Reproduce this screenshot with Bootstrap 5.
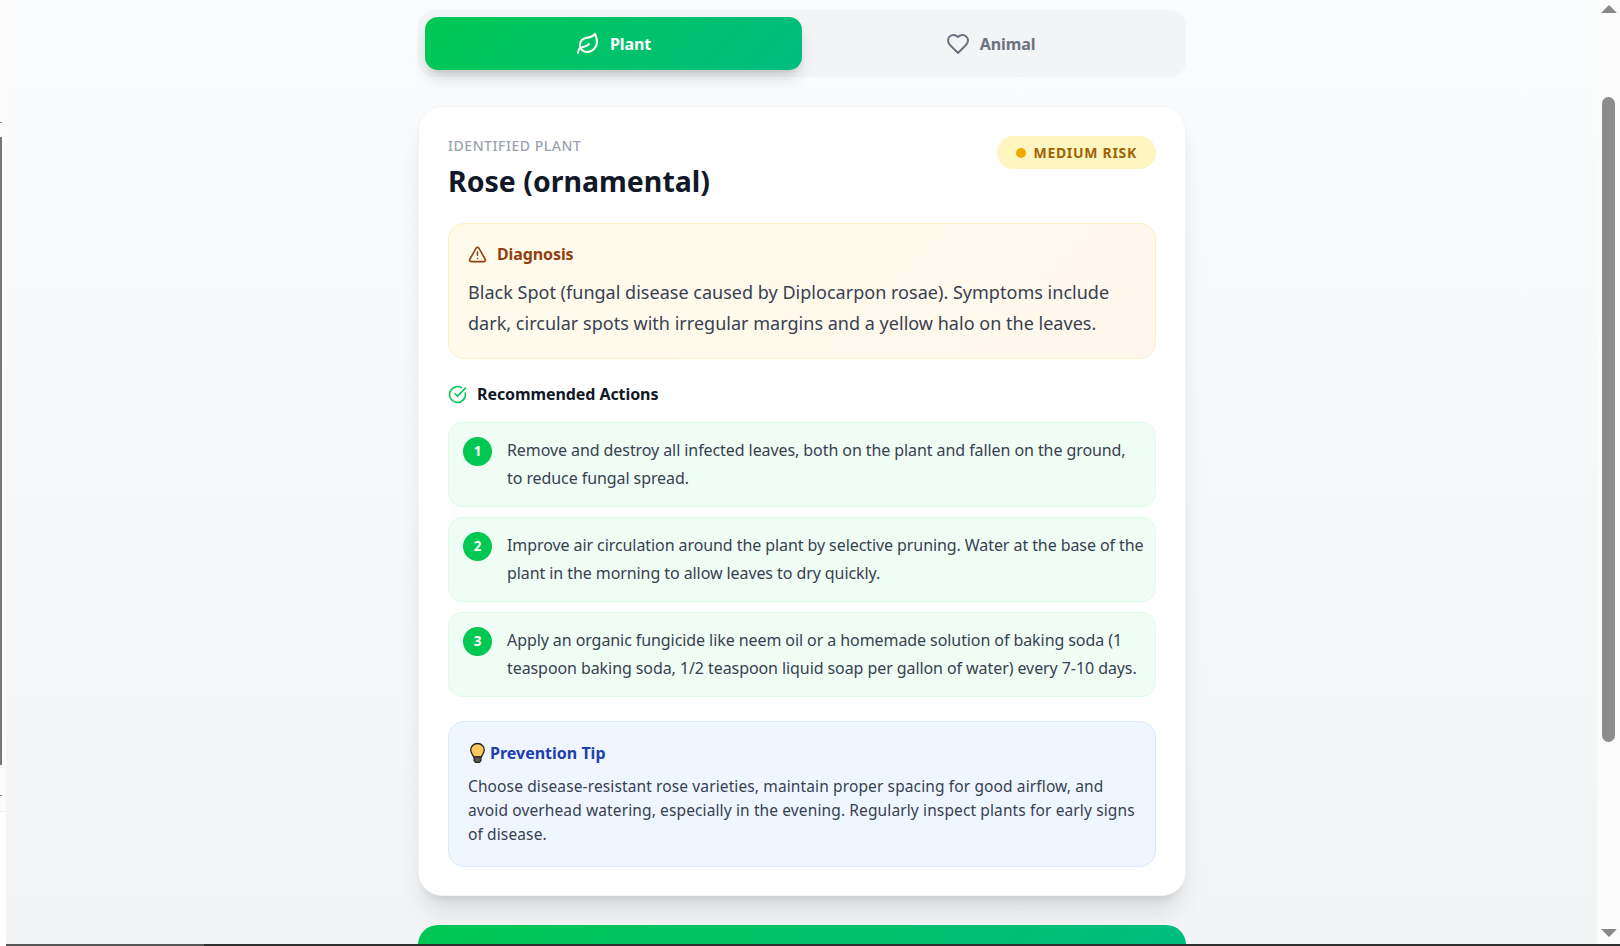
<!doctype html>
<html lang="en">
<head>
<meta charset="utf-8">
<title>Rose diagnosis</title>
<link href="https://cdn.jsdelivr.net/npm/bootstrap@5.3.0/dist/css/bootstrap.min.css" rel="stylesheet">
<style>
html,body{height:946px;overflow:hidden}
body{font-family:"Noto Sans","Open Sans",sans-serif;background:#fff;color:#374151}
.frame-row{height:944px}
.edge-strip{width:6px;background:#fbfbfb;position:relative}
.edge-rule{position:absolute;left:0;top:137px;width:2px;height:628px;background:#777}
.edge-mark{position:absolute;left:0;width:2px;height:1px;background:#888}
.mark-high{top:122px}
.mark-low{top:795px}
.edge-low{position:absolute;left:0;top:811px;width:6px;height:135px;background:#fff;border-top:1px solid #eee}
.page-area{flex:1;min-width:0;overflow:hidden;background:linear-gradient(180deg,#fafbfd,#f3f4f6);padding:10px 0 0 1px}
.page-col{width:768px;margin:0 auto}
.tab-track{background:#f3f4f6;border-radius:16px;padding:7px;height:67px}
.tab-item{flex:1;border-radius:13px;font-weight:700;font-size:16px;letter-spacing:-.1px;color:#6b7280;gap:10px}
.tab-on{background:linear-gradient(135deg,#00c853,#00bd80);color:#fff;box-shadow:0 10px 15px -3px rgba(0,0,0,.16),0 4px 6px -4px rgba(0,0,0,.12)}
.result-panel{margin-top:29px;background:#fff;border-radius:24px;padding:29px 29px 29px;height:790px;box-shadow:0 20px 25px -5px rgba(0,0,0,.1),0 8px 10px -6px rgba(0,0,0,.1);border:1px solid #f3f4f6}
.id-label{font-size:14px;font-weight:500;letter-spacing:.55px;color:#9ca3af;line-height:18px;margin-top:1px}
.plant-name{font-size:28.5px;font-weight:700;color:#111827;line-height:36px;margin:8px 0 0}
.risk-pill{background:#fef6c0;color:#a16207;border-radius:999px;height:33px;padding:0 19px;font-size:14px;font-weight:700;letter-spacing:.7px;gap:7px}
.risk-dot{width:10px;height:10px;border-radius:50%;background:#eeaa00}
.diag-box{margin-top:24px;height:136px;border-radius:16px;border:1px solid #fdf0c4;background:linear-gradient(135deg,#fffbeb,#fff7ed);padding:19px 19px}
.diag-title{font-size:16px;font-weight:700;color:#92400e;line-height:22px;letter-spacing:-.1px;gap:10px}
.diag-text{font-size:18px;line-height:31px;color:#374151;margin:12px 0 0;letter-spacing:.02px}
.act-head{margin-top:23px;font-size:16px;font-weight:700;color:#111827;line-height:22px;letter-spacing:-.08px;gap:10px;height:24px}
.step-list{margin-top:16px;gap:10px}
.step-row{height:85px;border-radius:14px;background:#f0fdf4;border:1px solid #dcfce7;padding:14px 8px 0 14px;gap:15px}
.step-num{width:29px;height:29px;border-radius:50%;background:#00c853;color:#fff;font-size:13.5px;font-weight:700;flex:none}
.step-text{font-size:16px;line-height:27.6px;margin:0;color:#374151;letter-spacing:-.08px}
.tip-box{margin-top:24px;height:146px;border-radius:16px;background:#eff6ff;border:1px solid #dbeafe;padding:20px 19px}
.tip-title{font-size:16px;font-weight:700;color:#1e40af;line-height:22px;gap:3px}
.tip-text{font-size:15.5px;line-height:24px;margin:10px 0 0;color:#374151;letter-spacing:.12px}
.cta-bar{margin-top:29px;height:40px;border-radius:20px 20px 0 0;background:linear-gradient(135deg,#00c853,#00bd80)}
.fake-scroll{width:23px;background:#fbfbfb;position:relative}
.scroll-up{position:absolute;left:4px;top:5px;width:0;height:0;border-left:8px solid transparent;border-right:8px solid transparent;border-bottom:8px solid #888}
.scroll-down{position:absolute;left:4px;bottom:7px;width:0;height:0;border-left:8px solid transparent;border-right:8px solid transparent;border-top:8px solid #888}
.scroll-thumb{position:absolute;left:5px;top:97px;width:13px;height:645px;border-radius:7px;background:#8c8c8c}
.bottom-line{height:2px;background:linear-gradient(90deg,#555 0 204px,#2f2f2f 204px)}
</style>
</head>
<body>
<div class="d-flex frame-row">
  <div class="edge-strip"><div class="edge-mark mark-high"></div><div class="edge-rule"></div><div class="edge-mark mark-low"></div><div class="edge-low"></div></div>
  <main class="page-area">
    <div class="page-col">
      <div class="tab-track d-flex">
        <div class="tab-item tab-on d-flex align-items-center justify-content-center">
          <svg width="24" height="24" viewBox="0 0 24 24" fill="none" stroke="currentColor" stroke-width="2" stroke-linecap="round" stroke-linejoin="round"><path d="M11 20A7 7 0 0 1 9.8 6.1C15.5 5 17 4.48 19 2c1 2 2 4.18 2 8 0 5.5-4.78 10-10 10Z"/><path d="M2 21c0-3 1.85-5.36 5.08-6C9.5 14.52 12 13 13 12"/></svg>
          <span>Plant</span>
        </div>
        <div class="tab-item d-flex align-items-center justify-content-center">
          <svg width="24" height="24" viewBox="0 0 24 24" fill="none" stroke="currentColor" stroke-width="2" stroke-linecap="round" stroke-linejoin="round"><path d="M19 14c1.49-1.46 3-3.21 3-5.5A5.5 5.5 0 0 0 16.5 3c-1.76 0-3 .5-4.5 2-1.500-1.500-2.740-2-4.500-2A5.500 5.500 0 0 0 2 8.500c0 2.300 1.500 4.050 3 5.500l7 7Z"/></svg>
          <span>Animal</span>
        </div>
      </div>

      <section class="result-panel">
        <div class="d-flex justify-content-between align-items-start">
          <div>
            <div class="id-label">IDENTIFIED PLANT</div>
            <h1 class="plant-name">Rose (ornamental)</h1>
          </div>
          <div class="risk-pill d-flex align-items-center"><span class="risk-dot"></span><span>MEDIUM RISK</span></div>
        </div>

        <div class="diag-box">
          <div class="diag-title d-flex align-items-center">
            <svg width="19" height="19" viewBox="0 0 24 24" fill="none" stroke="currentColor" stroke-width="2" stroke-linecap="round" stroke-linejoin="round"><path d="m21.730 18-8-14a2 2 0 0 0-3.480 0l-8 14A2 2 0 0 0 4 21h16a2 2 0 0 0 1.730-3Z"/><path d="M12 9v4"/><path d="M12 17h.010"/></svg>
            <span>Diagnosis</span>
          </div>
          <p class="diag-text">Black Spot (fungal disease caused by Diplocarpon rosae). Symptoms include dark, circular spots with irregular margins and a yellow halo on the leaves.</p>
        </div>

        <div class="act-head d-flex align-items-center">
          <svg width="19" height="19" viewBox="0 0 24 24" fill="none" stroke="#00c853" stroke-width="2" stroke-linecap="round" stroke-linejoin="round"><path d="M21.800 10A10 10 0 1 1 17 3.340"/><path d="m9 11 3 3L22 4"/></svg>
          <span>Recommended Actions</span>
        </div>

        <div class="step-list d-flex flex-column">
          <div class="step-row d-flex">
            <span class="step-num d-flex align-items-center justify-content-center">1</span>
            <p class="step-text">Remove and destroy all infected leaves, both on the plant and fallen on the ground, to&nbsp;reduce fungal spread.</p>
          </div>
          <div class="step-row d-flex">
            <span class="step-num d-flex align-items-center justify-content-center">2</span>
            <p class="step-text">Improve air circulation around the plant by selective pruning. Water at the base of the plant in the morning to allow leaves to dry quickly.</p>
          </div>
          <div class="step-row d-flex">
            <span class="step-num d-flex align-items-center justify-content-center">3</span>
            <p class="step-text">Apply an organic fungicide like neem oil or a homemade solution of baking soda (1 teaspoon baking soda, 1/2 teaspoon liquid soap per gallon of water) every 7-10 days.</p>
          </div>
        </div>

        <div class="tip-box">
          <div class="tip-title d-flex align-items-center">
            <svg width="19" height="22" viewBox="0 0 19 22"><path d="M9.500 1.500C5.400 1.500 2.700 4.500 2.700 8c0 3 2 4.300 3 7h7.600c1-2.700 3-4 3-7 0-3.500-2.700-6.500-6.800-6.500Z" fill="#fcc85c" stroke="#222" stroke-width="1.300"/><path d="M6 15h7v3.500l-1.500 2h-4L6 18.500Z" fill="#555" stroke="#222" stroke-width="1.100"/></svg>
            <span>Prevention Tip</span>
          </div>
          <p class="tip-text">Choose disease-resistant rose varieties, maintain proper spacing for good airflow, and avoid overhead watering, especially in the evening. Regularly inspect plants for early signs of disease.</p>
        </div>
      </section>
      <div class="cta-bar"></div>
    </div>
  </main>
  <div class="fake-scroll"><div class="scroll-up"></div><div class="scroll-thumb"></div><div class="scroll-down"></div></div>
</div>
<div class="bottom-line"></div>
<script src="https://cdn.jsdelivr.net/npm/bootstrap@5.3.0/dist/js/bootstrap.bundle.min.js"></script>
</body>
</html>
